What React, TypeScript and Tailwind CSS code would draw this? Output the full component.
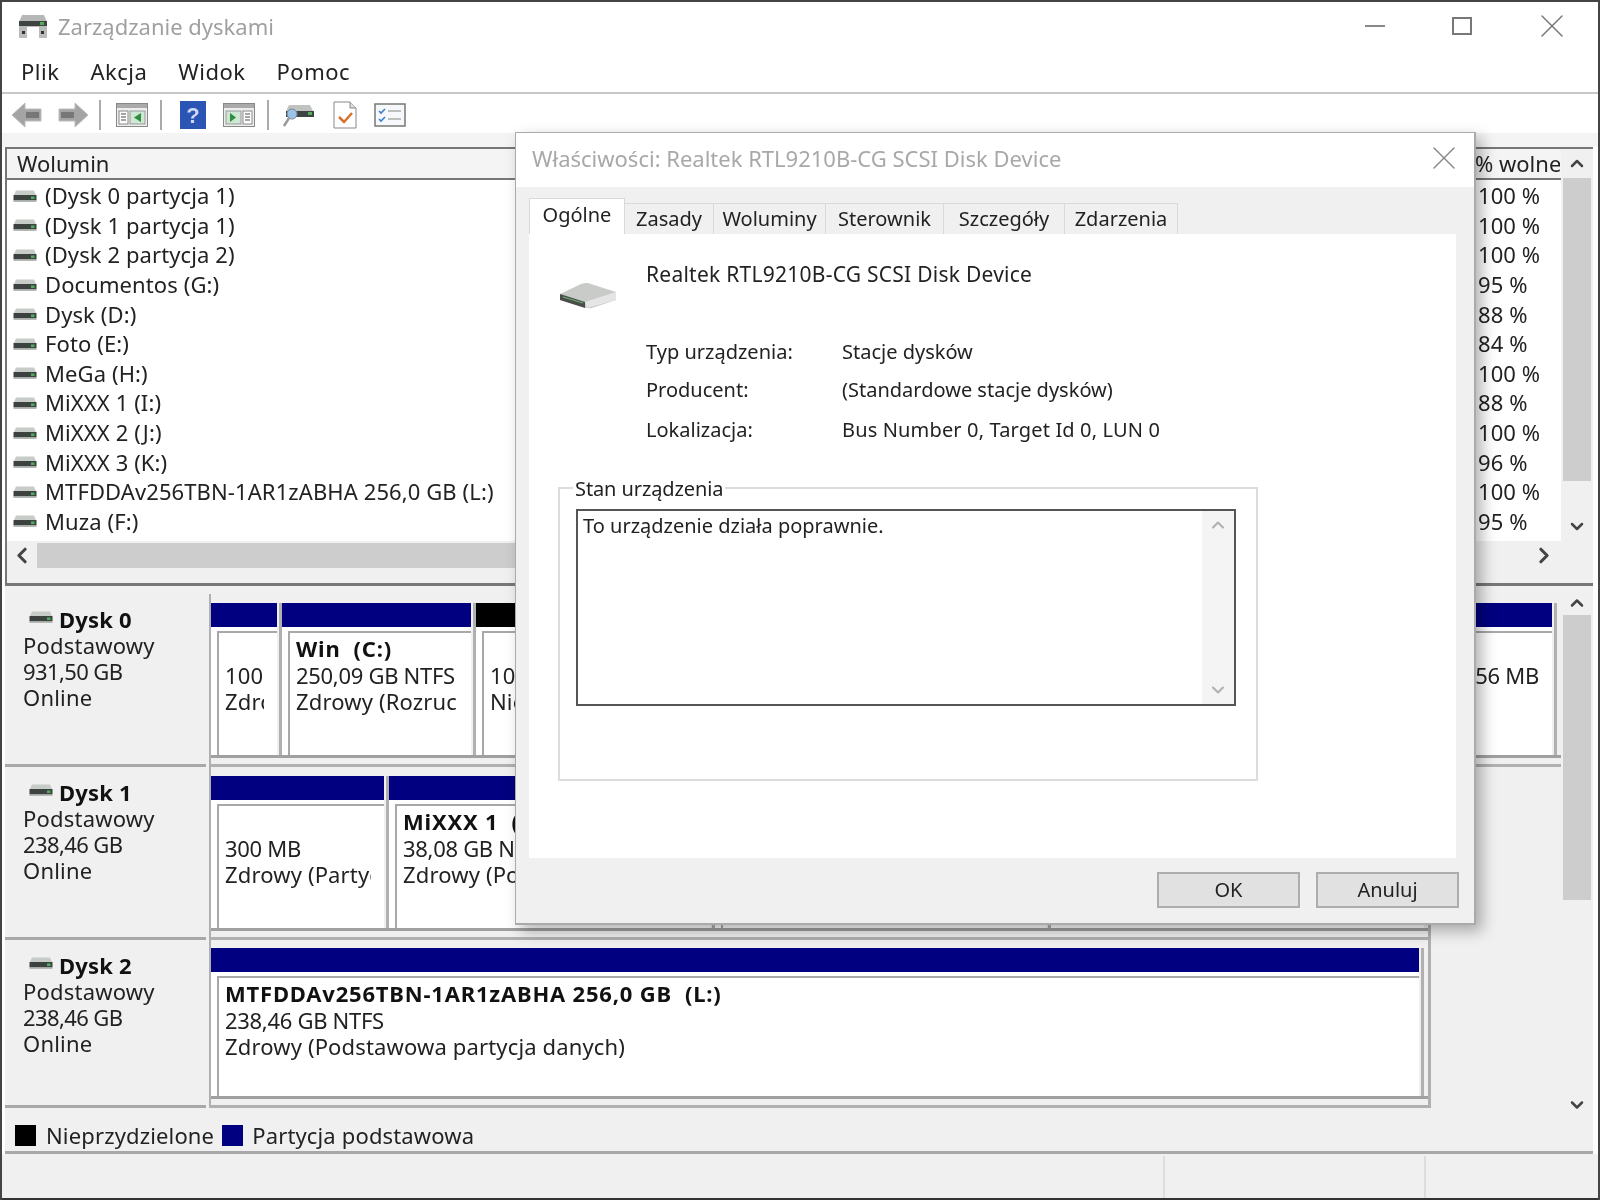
import React from 'react';
import { X, ChevronUp, ChevronDown, ChevronLeft, ChevronRight } from 'lucide-react';

const font = { fontFamily: '"Noto Sans", sans-serif' };

const volumes = [
  ['(Dysk 0 partycja 1)', '100 %'],
  ['(Dysk 1 partycja 1)', '100 %'],
  ['(Dysk 2 partycja 2)', '100 %'],
  ['Documentos (G:)', '95 %'],
  ['Dysk (D:)', '88 %'],
  ['Foto (E:)', '84 %'],
  ['MeGa (H:)', '100 %'],
  ['MiXXX 1 (I:)', '88 %'],
  ['MiXXX 2 (J:)', '100 %'],
  ['MiXXX 3 (K:)', '96 %'],
  ['MTFDDAv256TBN-1AR1zABHA 256,0 GB (L:)', '100 %'],
  ['Muza (F:)', '95 %'],
];

const DiskIcon = ({ className }: { className?: string }) => (
  <svg viewBox="0 0 24 14" className={className}>
    <path d="M1 6 L3 1.5 H21 L23 6 Z" fill="#c8ccc8" />
    <rect x="0.5" y="6" width="23" height="5.5" fill="#3c423f" />
    <rect x="18" y="7.5" width="3.5" height="2.5" fill="#4fae5a" />
    <rect x="0.5" y="11.5" width="23" height="1.5" fill="#b5b9b6" />
  </svg>
);

const Partition = ({
  width,
  color,
  lines,
}: {
  width: string;
  color: string;
  lines: { text: string; bold?: boolean; tight?: boolean }[];
}) => (
  <div className={`${width} shrink-0 flex flex-col h-full border-r-[3px] border-[#b0b0b0] pr-[2px]`}>
    <div className={`h-[24px] shrink-0 ${color}`} />
    <div className="flex-1 min-h-0 pl-[6px] pt-[4px] bg-white">
      <div className="h-full border-t-[2px] border-l-[2px] border-[#a8a8a8] pl-[6px] pt-[2px] pr-[13px]">
        <div className="overflow-hidden whitespace-pre">
          {lines.map((l, i) => (
            <div
              key={i}
              className={`h-[26.5px] leading-[26.5px] ${l.bold ? 'font-bold text-[#111] tracking-[0.8px]' : ''} ${l.tight ? 'tracking-[-0.3px]' : ''}`}
            >
              {l.text}
            </div>
          ))}
        </div>
      </div>
    </div>
  </div>
);

const DiskRow = ({
  name,
  size,
  children,
  last,
}: {
  name: string;
  size: string;
  children: React.ReactNode;
  last?: boolean;
}) => (
  <div className={`flex shrink-0 ${last ? 'h-[168px]' : 'h-[173px]'}`}>
    <div className="w-[201px] shrink-0 bg-[#f0f0f0] border-b-[3px] border-[#a8a8a8] pl-[18px] pt-[12px] text-[22px] tracking-[0.2px] leading-[26px] text-[#222]">
      <div className="flex items-center font-bold text-[#111]">
        <DiskIcon className="w-[26px] h-[14px] mr-[5px] ml-[5px] -mt-[5px]" />
        {name}
      </div>
      <div>Podstawowy</div>
      <div className="tracking-[-0.6px]">{size}</div>
      <div>Online</div>
    </div>
    {children}
  </div>
);

const DialogTab = ({ label, w }: { label: string; w: string }) => (
  <div className={`${w} h-[31px] bg-[#f0f0f0] border-t border-r border-[#d9d9d9] flex items-center justify-center text-[20px]`}>
    {label}
  </div>
);

export default function App() {
  return (
    <div style={font} className="relative w-[1600px] h-[1200px] overflow-hidden bg-white text-[#222] flex flex-col border-t-2 border-l-2 border-r-2 border-[#444] blur-[0.4px]">
      {/* pasek tytułu */}
      <div className="h-[48px] shrink-0 flex items-center pl-[15px] pr-[26px]">
        <svg viewBox="0 0 32 28" className="w-[32px] h-[28px]">
          <path d="M5 3 H27 L30 10 H2 Z" fill="#b5b8b5" />
          <rect x="2" y="9" width="28" height="5" fill="#3d4441" />
          <rect x="23" y="10" width="4" height="3" fill="#4fae5a" />
          <rect x="2" y="14" width="28" height="12" fill="#b9bcb9" />
          <rect x="10" y="15" width="12" height="11" fill="#fff" />
          <rect x="5" y="19" width="3" height="3" fill="#333" />
          <rect x="24" y="19" width="3" height="3" fill="#333" />
        </svg>
        <span className="ml-[9px] text-[22px] text-[#a0a0a0]">Zarządzanie dyskami</span>
        <div className="ml-auto flex items-center">
          <div className="w-[20px] h-[2px] bg-[#888]" />
          <div className="ml-[67px] w-[20px] h-[18px] border-2 border-[#777]" />
          <X className="ml-[60px] w-[40px] h-[40px] text-[#777]" strokeWidth={0.9} />
        </div>
      </div>

      {/* menu */}
      <div className="h-[44px] shrink-0 flex items-center pl-[19px] gap-[31px] text-[22px] tracking-[0.5px] border-b-2 border-[#c8c8c8]">
        <span>Plik</span>
        <span>Akcja</span>
        <span>Widok</span>
        <span>Pomoc</span>
      </div>

      {/* pasek narzędzi */}
      <div className="h-[39px] shrink-0 flex items-center pl-[9px] pt-[2px]">
        <svg viewBox="0 0 32 26" className="w-[32px] h-[26px]">
          <path d="M1 13 L14 1 V7 H30 V19 H14 V25 Z" fill="#a4a4a4" stroke="#bcbcbc" />
          <rect x="15" y="10" width="13" height="6" fill="#777" />
        </svg>
        <svg viewBox="0 0 32 26" className="ml-[14px] w-[32px] h-[26px]">
          <path d="M31 13 L18 1 V7 H2 V19 H18 V25 Z" fill="#a4a4a4" stroke="#bcbcbc" />
          <rect x="4" y="10" width="13" height="6" fill="#777" />
        </svg>
        <div className="ml-[10px] w-[2px] h-[30px] bg-[#aaa]" />
        <svg viewBox="0 0 32 24" className="ml-[15px] w-[32px] h-[24px]">
          <rect x="0.5" y="0.5" width="31" height="23" fill="#eee" stroke="#888" />
          <rect x="1" y="1" width="30" height="4" fill="#aaa" />
          <rect x="3" y="8" width="9" height="13" fill="#fff" stroke="#888" />
          <path d="M5 11 H10 M5 14 H10 M5 17 H10" stroke="#888" strokeWidth="1.5" />
          <rect x="14" y="8" width="15" height="13" fill="#cfe8d4" stroke="#999" />
          <path d="M18 14.5 L25 10 V19 Z" fill="#2d8f3e" />
        </svg>
        <div className="ml-[12px] w-[2px] h-[30px] bg-[#aaa]" />
        <svg viewBox="0 0 26 28" className="ml-[18px] w-[26px] h-[28px]">
          <rect width="26" height="28" fill="#2a55b5" />
          <text x="13" y="22" textAnchor="middle" fontSize="22" fontWeight="bold" fill="#cfd9f5" fontFamily="Liberation Sans">?</text>
        </svg>
        <svg viewBox="0 0 32 24" className="ml-[17px] w-[32px] h-[24px]">
          <rect x="0.5" y="0.5" width="31" height="23" fill="#eee" stroke="#888" />
          <rect x="1" y="1" width="30" height="4" fill="#aaa" />
          <rect x="20" y="8" width="9" height="13" fill="#fff" stroke="#888" />
          <path d="M22 11 H27 M22 14 H27 M22 17 H27" stroke="#888" strokeWidth="1.5" />
          <rect x="3" y="8" width="15" height="13" fill="#cfe8d4" stroke="#999" />
          <path d="M13 14.5 L7 10 V19 Z" fill="#2d8f3e" />
        </svg>
        <div className="ml-[12px] w-[2px] h-[30px] bg-[#aaa]" />
        <svg viewBox="0 0 32 26" className="ml-[14px] w-[32px] h-[26px]">
          <path d="M6 3 H27 L30 9 H3 Z" fill="#c0c3c0" />
          <rect x="3" y="9" width="28" height="6" fill="#3d4441" />
          <rect x="25" y="10" width="4" height="3" fill="#4fae5a" />
          <circle cx="9" cy="12" r="5" fill="#9bc3e8" stroke="#789" />
          <path d="M6 16 L1 24" stroke="#999" strokeWidth="2.5" />
        </svg>
        <svg viewBox="0 0 24 28" className="ml-[18px] w-[24px] h-[28px]">
          <path d="M1 1 H17 L23 7 V27 H1 Z" fill="#fff" stroke="#888" />
          <path d="M17 1 V7 H23" fill="#ddd" stroke="#888" />
          <path d="M6 16 L11 21 L19 12" fill="none" stroke="#d8712c" strokeWidth="2.5" />
        </svg>
        <svg viewBox="0 0 32 24" className="ml-[17px] w-[32px] h-[24px]">
          <rect x="1" y="1" width="30" height="22" fill="#f6f8fb" stroke="#777" strokeWidth="1.5" />
          <path d="M5 8 L7 10 L11 6 M5 16 L7 18 L11 14" fill="none" stroke="#3a7fd0" strokeWidth="1.6" />
          <path d="M14 8 H27 M14 16 H27" stroke="#aaa" strokeWidth="1.5" />
        </svg>
      </div>

      <div className="h-[14px] shrink-0 bg-[#f4f4f4]" />

      {/* panele */}
      <div className="shrink-0 flex flex-col pl-[3px] pr-[5px]">
        {/* lista woluminów */}
        <div className="h-[436px] shrink-0 flex flex-col border-t-2 border-l-2 border-[#777]">
          <div className="h-[392px] shrink-0 flex">
            <div className="flex-1 min-w-0 flex flex-col">
              <div className="h-[31px] shrink-0 flex justify-between items-center bg-[#f4f4f4] border-b-2 border-[#777] pl-[10px] text-[22px]">
                <span>Wolumin</span>
                <span className="w-[85px] mr-[1px] overflow-hidden whitespace-nowrap">% wolne</span>
              </div>
              <div className="flex-1 min-h-0 bg-white pt-[1px]">
                {volumes.map(([name, free]) => (
                  <div key={name} className="h-[29.6px] flex items-center text-[22px] tracking-[0.1px] pr-[2px]">
                    <DiskIcon className="ml-[6px] w-[24px] h-[14px] shrink-0" />
                    <span className="ml-[8px]">{name}</span>
                    <span className="ml-auto w-[81px]">{free}</span>
                  </div>
                ))}
              </div>
            </div>
            <div className="w-[32px] shrink-0 bg-[#f0f0f0] flex flex-col items-center">
              <ChevronUp className="w-[20px] h-[29px] shrink-0 text-[#444]" strokeWidth={3} />
              <div className="w-[28px] h-[303px] shrink-0 bg-[#cdcdcd]" />
              <div className="flex-1" />
              <ChevronDown className="w-[20px] h-[29px] shrink-0 text-[#444]" strokeWidth={3} />
            </div>
          </div>
          <div className="flex-1 min-h-0 flex items-start bg-[#f0f0f0] pt-[2px] pr-[34px]">
            <ChevronLeft className="w-[30px] h-[25px] text-[#444]" strokeWidth={3} />
            <div className="w-[480px] h-[25px] bg-[#cdcdcd]" />
            <div className="flex-1" />
            <ChevronRight className="w-[30px] h-[25px] text-[#444]" strokeWidth={3} />
          </div>
        </div>

        {/* rozdzielacz */}
        <div className="h-[8px] shrink-0 border-t-[3px] border-[#777] bg-[#f0f0f0]" />

        {/* mapa dysków */}
        <div className="h-[528px] shrink-0 flex bg-[#f0f0f0] text-[22px] tracking-[0.15px]">
          <div className="flex-1 min-w-0 flex flex-col pt-[3px]">
            <DiskRow name="Dysk 0" size="931,50 GB">
              <div className="flex-1 min-w-0 ml-[3px] pt-[9px] pb-[6px] border-l-[2px] border-b-[3px] border-[#b0b0b0]">
                <div className="h-full flex border-b-[3px] border-[#a0a0a0] pr-[4px]">
                  <Partition width="w-[71px]" color="bg-[#000080]" lines={[{ text: '' }, { text: '100 MB' }, { text: 'Zdrowy' }]} />
                  <Partition width="w-[194px]" color="bg-[#000080]" lines={[{ text: 'Win  (C:)', bold: true }, { text: '250,09 GB NTFS', tight: true }, { text: 'Zdrowy (Rozruch, Plik)' }]} />
                  <Partition width="w-[500px]" color="bg-black" lines={[{ text: '' }, { text: '102,00 GB' }, { text: 'Nieprzydzielone' }]} />
                  <div className="flex-1" />
                  <Partition width="w-[108px]" color="bg-[#000080]" lines={[{ text: '' }, { text: '956 MB', tight: true }]} />
                </div>
              </div>
            </DiskRow>
            <DiskRow name="Dysk 1" size="238,46 GB">
              <div className="w-[1222px] ml-[3px] pt-[9px] pb-[6px] border-l-[2px] border-b-[3px] border-r-[3px] border-[#b0b0b0]">
                <div className="h-full flex border-b-[3px] border-[#a0a0a0] pr-[4px]">
                  <Partition width="w-[178px]" color="bg-[#000080]" lines={[{ text: '' }, { text: '300 MB', tight: true }, { text: 'Zdrowy (Partycja)' }]} />
                  <Partition width="w-[326px]" color="bg-[#000080]" lines={[{ text: 'MiXXX 1  (I:)', bold: true }, { text: '38,08 GB NTFS', tight: true }, { text: 'Zdrowy (Podstawowa)' }]} />
                  <Partition width="w-[336px]" color="bg-[#000080]" lines={[]} />
                  <div className="flex-1 bg-white" />
                </div>
              </div>
            </DiskRow>
            <DiskRow name="Dysk 2" size="238,46 GB" last>
              <div className="w-[1222px] ml-[3px] pt-[8px] pb-[6px] border-l-[2px] border-b-[3px] border-r-[3px] border-[#b0b0b0]">
                <div className="h-full flex border-b-[3px] border-[#a0a0a0] pr-[4px]">
                  <Partition width="w-full" color="bg-[#000080]" lines={[{ text: 'MTFDDAv256TBN-1AR1zABHA 256,0 GB  (L:)', bold: true }, { text: '238,46 GB NTFS', tight: true }, { text: 'Zdrowy (Podstawowa partycja danych)' }]} />
                </div>
              </div>
            </DiskRow>
          </div>
          <div className="w-[32px] shrink-0 flex flex-col items-center pb-[2px]">
            <ChevronUp className="w-[20px] h-[24px] shrink-0 text-[#444]" strokeWidth={3} />
            <div className="w-[28px] h-[285px] shrink-0 bg-[#cdcdcd]" />
            <div className="flex-1" />
            <ChevronDown className="w-[20px] h-[24px] shrink-0 text-[#444]" strokeWidth={3} />
          </div>
        </div>

        {/* legenda */}
        <div className="h-[35px] shrink-0 flex items-center bg-[#f0f0f0] border-b-[3px] border-[#a8a8a8] pl-[10px] text-[22px] tracking-[0.15px]">
          <div className="w-[21px] h-[21px] bg-black" />
          <span className="ml-[10px]">Nieprzydzielone</span>
          <div className="ml-[8px] w-[21px] h-[21px] bg-[#000080]" />
          <span className="ml-[9px]">Partycja podstawowa</span>
        </div>
      </div>

      {/* pasek stanu */}
      <div className="flex-1 min-h-0 flex bg-[#f0f0f0] border-b-2 border-[#333] pt-[2px]">
        <div className="w-[1163px] border-r-2 border-[#ddd]" />
        <div className="w-[261px] border-r-2 border-[#ddd]" />
      </div>

      {/* okno właściwości */}
      <div className="absolute left-[513px] top-[130px] w-[961px] h-[793px] flex flex-col bg-[#f0f0f0] border border-[#aaa] border-r-2 border-b-2 shadow-[6px_6px_14px_rgba(0,0,0,0.3)]">
        <div className="h-[54px] shrink-0 bg-white flex items-center justify-between pl-[16px] pr-[10px] pb-[4px]">
          <span className="text-[22px] text-[#a8a8a8]">Właściwości: Realtek RTL9210B-CG SCSI Disk Device</span>
          <X className="w-[40px] h-[40px] text-[#888]" strokeWidth={0.9} />
        </div>
        <div className="flex-1 min-h-0 flex flex-col pl-[13px] pr-[18px] pt-[11px]">
          <div className="h-[36px] shrink-0 flex items-end">
            <div className="w-[96px] h-[36px] bg-white border-t border-l border-r border-[#d9d9d9] flex items-center justify-center text-[20px] pb-[4px]">Ogólne</div>
            <DialogTab label="Zasady" w="w-[89px]" />
            <DialogTab label="Woluminy" w="w-[112px]" />
            <DialogTab label="Sterownik" w="w-[118px]" />
            <DialogTab label="Szczegóły" w="w-[121px]" />
            <DialogTab label="Zdarzenia" w="w-[113px]" />
          </div>
          <div className="h-[624px] shrink-0 bg-white pl-[30px] text-[20px]">
            <div className="flex pt-[27px]">
              <svg viewBox="0 0 58 28" className="w-[58px] h-[28px] mt-[20px]">
                <path d="M1 13 L22 3 Q28 1 32 3 L57 11 V19 L33 27 Q28 28 24 26 L1 19 Z" fill="#c9cbc9" />
                <path d="M1 13 L26 21 V27 L1 19 Z" fill="#4a4d4a" />
                <path d="M26 21 L57 11 V19 L28 27 Z" fill="#e4e5e4" />
                <path d="M4 16 L24 22" stroke="#66b36e" strokeWidth="1.2" />
              </svg>
              <span className="ml-[29px] leading-[26px] text-[21px] tracking-[0.25px]">Realtek RTL9210B-CG SCSI Disk Device</span>
            </div>
            <div className="pl-[87px] mt-[23px]">
              <div className="flex h-[38px] leading-[39px]"><span className="w-[196px]">Typ urządzenia:</span><span>Stacje dysków</span></div>
              <div className="flex h-[40px] leading-[39px]"><span className="w-[196px]">Producent:</span><span>(Standardowe stacje dysków)</span></div>
              <div className="flex h-[39px] leading-[39px]"><span className="w-[196px]">Lokalizacja:</span><span className="tracking-[0.15px]">Bus Number 0, Target Id 0, LUN 0</span></div>
            </div>
            <div className="relative mt-[38px] -ml-[1px] w-[700px] h-[294px] border-2 border-[#dcdcdc] pl-[16px] pr-[20px] pt-[20px]">
              <span className="absolute left-[13px] -top-[13px] bg-white px-[2px] leading-[26px] tracking-[-0.1px]">Stan urządzenia</span>
              <div className="h-[197px] border-2 border-[#555] flex">
                <div className="flex-1 pl-[5px] pt-[1px] leading-[28px]">To urządzenie działa poprawnie.</div>
                <div className="w-[32px] bg-[#f4f4f4] flex flex-col justify-between items-center py-[2px]">
                  <ChevronUp className="w-[20px] h-[24px] text-[#b0b0b0]" strokeWidth={2.5} />
                  <ChevronDown className="w-[20px] h-[24px] text-[#b0b0b0]" strokeWidth={2.5} />
                </div>
              </div>
            </div>
          </div>
          <div className="flex justify-end gap-[16px] mt-[14px] -mr-[3px] text-[20px]">
            <button className="w-[143px] h-[36px] bg-[#e1e1e1] border-2 border-[#adadad]">OK</button>
            <button className="w-[143px] h-[36px] bg-[#e1e1e1] border-2 border-[#adadad]">Anuluj</button>
          </div>
        </div>
      </div>
    </div>
  );
}
